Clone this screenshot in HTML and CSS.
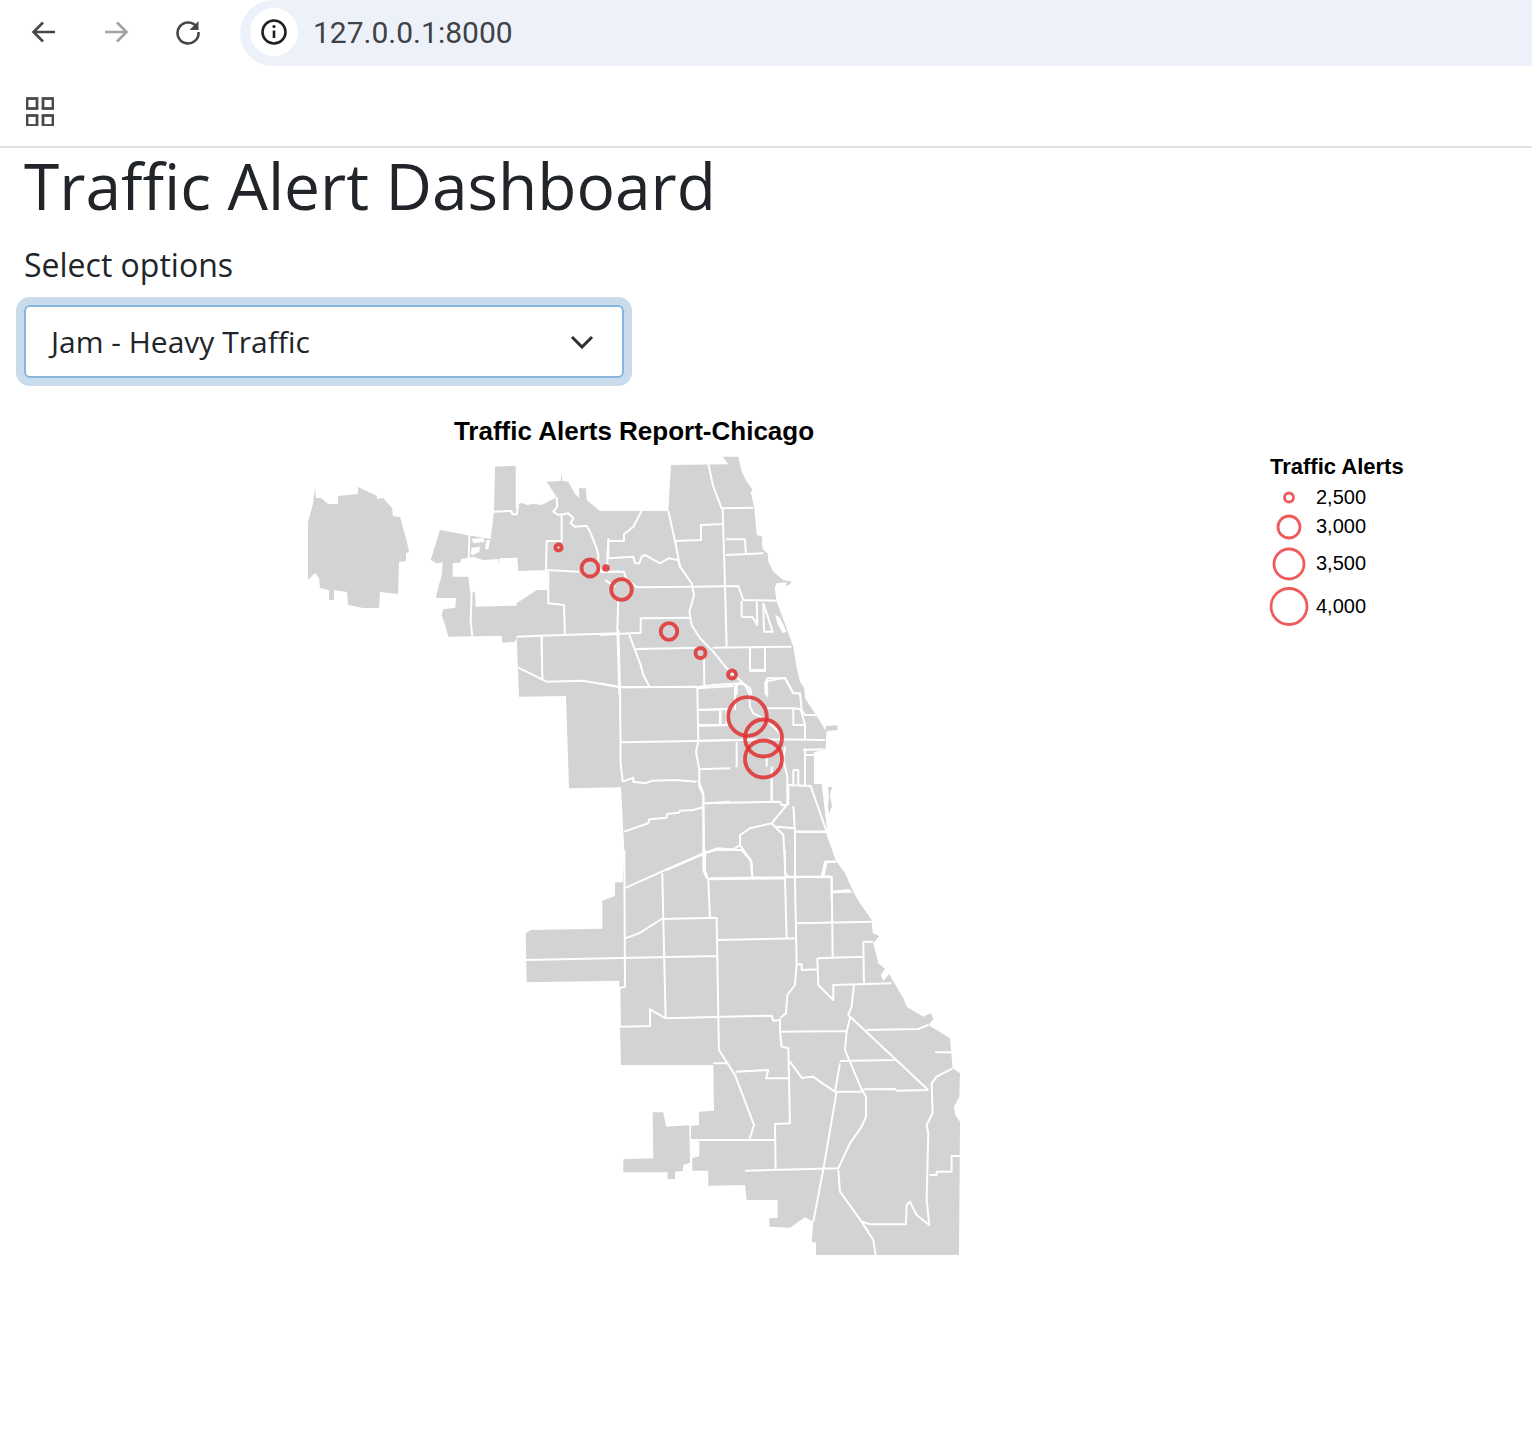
FILE: index.html
```html
<!DOCTYPE html>
<html lang="en">
<head>
<meta charset="utf-8">
<title>Traffic Alert Dashboard</title>
<link rel="stylesheet" href="styles.css">
</head>
<body>
<header class="browser-bar">
  <nav class="nav-icons">
    <svg class="nav-icon" viewBox="0 0 28 28"><path class="ic-dark" d="M25 14H4M13 4.500 3.500 14l9.500 9.500"/></svg>
    <svg class="nav-icon" viewBox="0 0 28 28"><path class="ic-faint" d="M3 14h21M15 4.500l9.500 9.500-9.500 9.500"/></svg>
    <svg class="nav-icon" viewBox="0 0 28 28"><path class="ic-dark" d="M23 9.500A10.500 10.500 0 1 0 24.500 14"/><path class="ic-fill" d="M24.500 3v9h-9z"/></svg>
  </nav>
  <div class="address">
    <span class="site-info">
      <svg class="info-icon" viewBox="0 0 28 28"><circle class="ic-black" cx="14" cy="14" r="11.500"/><path class="ic-black" d="M14 12.500V20"/><circle class="ic-dot" cx="14" cy="8.500" r="1.600"/></svg>
    </span>
    <span class="url">127.0.0.1:8000</span>
  </div>
</header>
<div class="app-bar">
  <svg class="apps-icon" viewBox="0 0 28 28">
    <rect class="ic-grid" x="1" y="1" width="10" height="10"/><rect class="ic-grid" x="17" y="1" width="10" height="10"/>
    <rect class="ic-grid" x="1" y="18" width="10" height="10"/><rect class="ic-grid" x="17" y="18" width="10" height="10"/>
  </svg>
</div>
<main class="content">
  <h1 class="page-title">Traffic Alert Dashboard</h1>
  <label class="field-label">Select options</label>
  <div class="select-box">
    <span>Jam - Heavy Traffic</span>
    <svg class="chevron" viewBox="0 0 24 14"><path d="M2 2l10 10L22 2"/></svg>
  </div>
</main>
<section class="figure">
<svg class="chart" viewBox="0 400 1532 880">
  <text class="chart-title" x="634" y="440" text-anchor="middle">Traffic Alerts Report-Chicago</text>

  <g class="land">
    <path d="M308 522L313 504 315 488 316 498 321 498 328 504 338 504 338 496 358 494 358 487 377 496 377 499 383 498 392 508 393 516 400 517 407 542 409 552 406 553 406 561 399 562 398 594 380 592 379 608 363 608 348 605 347 592 334 590 334 600 329 600 329 590 320 588 319 578 315 573 308 580Z"/>
    <path d="M430.700 560L440 530 466.700 535 490.700 539 494 511.700 495 466.700 515.700 465.700 515.700 510 518 505 521.700 502.700 526.700 505 533 504 541.700 505 556.700 497.300 546.700 481.700 560.700 481 561.700 473 562.300 481 568.300 481.700 575 494.300 579.300 497.700 579 488.300 586 488.300 586.700 500 600 511 641.700 511 668.300 511 671 465 728.300 464.300 722.700 456.700 738.300 456.700 741.700 471.700 746.700 481.700 752.700 490 750.700 492.300 754.300 508.300 756.700 535 762.300 536.700 761.700 545 763.300 550 767.700 553.300 768.300 561.700 773.300 571.700 783.300 580 791.700 581.700 790 584.300 783 587 775 585.700 775 590 776.700 601.700 781.700 615 793.300 646.700 796.700 668.300 800 681.700 804.300 688.300 805 698.300 816.700 716 825.700 730.700 826 726 837.300 725.300 837.700 730 826.700 731 826 738.300 825.700 748.300 823 750 814 752 814 784 821.700 784 827.300 831.700 833.300 851.700 836.700 861.700 845 873.300 853.300 891.700 860 903.300 871.700 920 872.700 933 879.300 936 873.300 943.300 878.300 963.300 885 969 880.700 975 883.300 980.700 889 974 903.300 998.300 906.700 1006.700 923.300 1016.700 931 1013 933.300 1019.300 928.300 1025 950 1038.300 952.700 1068.300 960 1073.300 959.300 1096.700 954 1106.700 955 1115 960 1121.700 959 1255 816 1255 816 1242.700 811.700 1241.700 813.300 1221.700 805 1217.300 798.300 1221.700 790 1227.700 769.300 1226.700 769.300 1218.300 777.700 1217.700 777.700 1200 746.700 1200 745 1185 708.300 1185.700 708.300 1170.700 692.300 1170.700 692.300 1158.300 699.300 1156 699.300 1141.700 691 1140 691 1126 699 1125 699 1111.700 714 1110.700 713.300 1065 621 1065 620 1026.700 619.300 988.300 619.300 980.700 526.700 982.300 525.700 933.300 530.700 930 602.300 928.700 602.300 900.700 615 896 615 882.300 622.700 882.300 624.300 850 621 787.300 569 788.300 566 696 519 696.700 516.700 636.700 515 641.700 502.300 642.700 501.700 635.700 448.300 636.700 445 625 441.700 615 443.300 609.300 455.300 607.700 456 598.300 435.700 597.700 441.700 575 442.700 562.300 436.700 563.300Z"/>
    <path d="M652.700 1112.300L663.300 1112.300 666 1126.700 689.300 1125.300 690 1162.700 683.300 1165 682.700 1171 675 1171.700 675 1179 667.700 1179 667.700 1172.300 623.300 1172.300 623.300 1159.300 653.300 1158.300Z"/>
    <path d="M828 787L832 787 830 795 832 806 829 814 828 806 829 797Z"/>
  </g>

  <g class="gaps" transform="translate(300 455) scale(.3333)">
    <path d="M458 325L482 322 483 312 497 310 522 305 530 310 550 315 595 312 598 330 598 310 652 308 655 348 742 345 745 405 710 405 650 445 650 452 527 455 525 410 510 410 505 365 458 365Z"/>
    <path d="M515 252L550 248 555 260 520 265ZM515 278L540 275 538 290 520 300 512 298ZM560 255L570 255 565 285 555 280Z"/>
  </g>
  <g class="gaps" transform="translate(600 455) scale(.3333)">
    <path d="M525 478L540 488 560 530 548 535 532 505Z"/>
    <path d="M528 385L560 382 555 400 530 402Z"/>
  </g>

  <g class="borders" transform="translate(300 455) scale(.3333)">
    <path d="M508 240L505 365M515 410L512 500 517 543"/>
    <path d="M770 127L772 155 760 170 775 180 805 175 820 190 812 205 825 215 860 212 870 230 890 280 895 300 895 330 905 350"/>
    <path d="M785 180L785 258 740 258 738 345 838 350M745 350L745 445 792 450 795 540M650 545L720 542 957 535M725 545L725 600M582 170L635 168 637 178 650 178 655 150"/>
    <path d="M905 350L960 350M915 375L945 395"/>
  </g>
  <g class="borders" transform="translate(600 455) scale(.3333)">
    <path d="M25 250L25 310 100 305 105 325 118 325 125 305 135 300 180 325 205 310 235 315 240 335 275 385 282 420 268 470 275 510 300 550 340 590 380 640 430 685 450 700 455 720"/>
    <path d="M125 168L100 215 72 238 72 258 25 258 22 300 22 340M205 168L225 258 240 335M325 28L340 95 365 160 460 158M368 160L375 390 380 578M225 258L303 255 303 210 372 207M378 253L435 253 438 298M378 300L490 295"/>
    <path d="M0 350L72 350 78 370 110 397 280 395 415 393 430 435 530 437M425 437L425 485 458 487 472 510 470 440M490 445L492 530 518 530 490 445M55 430L52 520 58 720M0 540L122 533 122 490 270 488M88 540L122 630 130 660 148 695M108 582L305 578M338 578L575 575M312 600L313 695M0 685L60 697 300 695 340 690 430 685M450 580L450 648 495 648 495 578M495 680L555 668 580 715M495 680L497 720M410 690L410 720"/>
  </g>
  <g class="borders" transform="translate(510 630) scale(.3333)">
    <path d="M95 20L97 148M25 113L110 155 220 152 330 172 560 170M325 0L330 172 332 400 338 455M332 337L560 333 660 330M338 455L370 443 370 455 405 460 428 452 495 450 560 455M562 172L565 335 558 365 568 420 568 470 580 495 583 720M565 240L660 236M565 288L660 285M630 240L630 285M566 418L660 415M590 520L660 515M342 605L415 580 418 568 470 563 472 552 507 548 510 542 550 540 580 532M470 720L580 672 620 655 660 658"/>
  </g>
  <g class="borders" transform="translate(690 660) scale(.3333)">
    <path d="M135 78L150 70 165 75 178 100 180 140 190 160 230 180 270 220 275 250M135 78L135 150M92 150L92 195M110 150L110 195M0 243L270 238 405 240M140 322L140 240M245 320L245 422M230 320L230 290M285 260L280 300 292 350 292 435M295 375L362 378 410 515 440 600M315 515L412 515M410 605L400 650 425 650 425 720M410 605L440 605M425 695L480 690M345 265L345 375M310 330L310 375M325 330L325 375M310 330L325 330M340 270L400 268M345 285L372 285M230 55L285 55 310 100 330 100 335 150 345 165 380 165M230 55L232 110M310 145L332 148 345 195 310 195ZM232 145L310 145M345 195L345 240M180 0L180 30 225 30 225 0M22 85L130 78M22 150L115 148M22 195L115 195"/>
  </g>
  <g class="borders" transform="translate(620 780) scale(.3333)">
    <path d="M270 295L630 290M235 0L250 40 250 70 480 65 485 75 500 75 455 130 390 145 360 165 360 195 340 208 285 207M455 130L490 165 497 295M470 140L525 145 525 290M520 78L525 155 620 155M645 245L615 245 605 292M360 195L392 240 397 295M505 20L505 75M455 0L455 62M250 70L250 270 260 295"/>
  </g>
  <g class="borders" transform="translate(500 850) scale(.3333)">
    <path d="M373 115L485 65 610 10 650 0 725 0 755 35 757 85M615 0L615 60 625 90 630 205M625 88L855 85 860 265M855 0L855 70 865 80 990 80M885 0L885 85 890 340M890 80L995 82 998 320M968 80L978 35 1005 35M995 127L1055 125M890 220L1115 215M650 270L890 265M373 0L375 410 358 415 360 530M375 265L417 250 485 207 650 203 655 500 657 600 705 675 762 825 748 870M487 70L490 210 497 505M78 330L650 318M497 505L450 478 450 528 360 530M497 505L815 497 820 512 840 510 840 545"/>
    <path d="M890 340L885 405 862 435 858 490 840 505M890 343L905 343 905 360 952 358M952 325L1090 320M952 325L955 405 1000 450 1000 405 1175 400M1090 275L1120 275M1090 275L1092 400M1062 405L1055 470 1045 495 1285 720M1050 505L1040 545 1035 600 1085 718 1098 740 1098 800 1085 830 1050 880 1015 955 735 962M840 545L1040 543M1020 633L1185 630M1100 540L1255 537 1285 525M840 545L845 590 865 595 870 820 825 822 827 958M870 635L905 683 940 680 960 695 1005 725 1020 640M1005 725L1085 725M1090 718L1185 717 1190 722 1285 720M1010 725L970 958 940 1115M1015 960L1020 1025 1085 1115 1120 1170 1127 1215M1085 1115L1110 1123 1218 1123 1220 1065 1230 1055 1250 1095 1288 1125 1280 1050 1285 850 1280 825 1298 790 1295 700 1310 680 1358 655M1288 975L1310 975 1310 965 1355 965 1355 918 1380 918M1305 607L1355 607M573 870L825 870M708 665L805 660 798 685 865 685M640 640L680 640"/>
  </g>

  <g class="markers">
    <circle cx="558.500" cy="547.500" r="3.200"/>
    <circle cx="590" cy="568" r="8.500"/>
    <circle class="marker-solid" cx="606" cy="568" r="3.800"/>
    <circle cx="621.500" cy="589.500" r="10.300"/>
    <circle cx="669" cy="631.500" r="8.300"/>
    <circle cx="700.500" cy="653" r="5"/>
    <circle cx="732" cy="674.500" r="4"/>
    <circle cx="747.500" cy="716.500" r="19.300"/>
    <circle cx="763.500" cy="738" r="18.500"/>
    <circle cx="763.500" cy="759" r="18.500"/>
  </g>

  <text class="legend-title" x="1270" y="474">Traffic Alerts</text>
  <g class="legend-marks">
    <circle cx="1289" cy="497.500" r="4.500"/>
    <circle cx="1289" cy="527" r="11"/>
    <circle cx="1289" cy="564" r="15"/>
    <circle cx="1289" cy="606.500" r="18"/>
  </g>
  <g class="legend-labels">
    <text x="1316" y="504">2,500</text>
    <text x="1316" y="533">3,000</text>
    <text x="1316" y="570">3,500</text>
    <text x="1316" y="613">4,000</text>
  </g>
</svg>
</section>
</body>
</html>
```
FILE: styles.css
```css
* { box-sizing: border-box; }
html, body { margin: 0; padding: 0; background: #fff; }
body { font-family: "Open Sans", "Noto Sans", sans-serif; color: #212529; }

.browser-bar { display: flex; align-items: flex-start; height: 66px; }
.nav-icons { display: flex; gap: 44px; padding: 18px 0 0 30px; width: 240px; }
.nav-icon { width: 28px; height: 28px; fill: none; }
.ic-dark { stroke: #474747; stroke-width: 2.600; fill: none; }
.ic-faint { stroke: #a3a3a3; stroke-width: 2.600; fill: none; }
.ic-fill { fill: #474747; }
.ic-black { stroke: #1f1f1f; stroke-width: 2.600; fill: none; }
.ic-dot { fill: #1f1f1f; }
.address { flex: 1; display: flex; align-items: center; height: 66px; padding-left: 10px; gap: 15px; background: #edf2fa; border-radius: 33px 0 0 33px; }
.site-info { display: flex; align-items: center; justify-content: center; width: 48px; height: 48px; margin-top: -2px; border-radius: 50%; background: #fff; }
.info-icon { width: 28px; height: 28px; }
.url { font-family: Roboto, sans-serif; font-size: 30px; color: #3f4246; margin-top: -2px; }

.app-bar { display: flex; align-items: center; height: 82px; padding: 10px 0 0 26px; border-bottom: 2px solid #e1e1e1; }
.apps-icon { width: 28px; height: 29px; }
.ic-grid { fill: none; stroke: #4a4a4a; stroke-width: 2.800; }

.content { padding: 0 24px; }
.page-title { margin: 0; font-size: 64px; font-weight: 400; line-height: 76px; color: #212529; }
.field-label { display: block; margin-top: 19px; font-size: 32px; line-height: 44px; color: #212529; }
.select-box { display: flex; align-items: center; justify-content: space-between; width: 600px; height: 73px; margin-top: 18px; padding: 0 28px 0 25px; font-size: 30px; background: #fff; border: 2px solid #86b6de; border-radius: 6px; box-shadow: 0 0 0 8px #cadcec; }
.chevron { width: 24px; height: 14px; margin-top: 0; fill: none; stroke: #2b3035; stroke-width: 3; }

.figure { margin-top: 22px; }
.chart { display: block; width: 1532px; height: 880px; }
.chart-title { font-family: "Liberation Sans", Arial, sans-serif; font-weight: 700; font-size: 26px; fill: #000; }
.land path { fill: #d3d3d3; }
.gaps path { fill: #fff; }
.borders path { fill: none; stroke: #fff; stroke-width: 2; vector-effect: non-scaling-stroke; stroke-linejoin: round; }
.markers circle { fill: none; stroke: #e02f2f; stroke-opacity: .85; stroke-width: 3.800; }
.markers .marker-solid { fill: #e02f2f; fill-opacity: .85; stroke: none; }
.legend-title { font-family: "Liberation Sans", Arial, sans-serif; font-weight: 700; font-size: 22px; fill: #000; }
.legend-marks circle { fill: none; stroke: #ef5b5b; stroke-width: 2.800; }
.legend-labels text { font-family: "Liberation Sans", Arial, sans-serif; font-size: 20px; fill: #000; }
```
